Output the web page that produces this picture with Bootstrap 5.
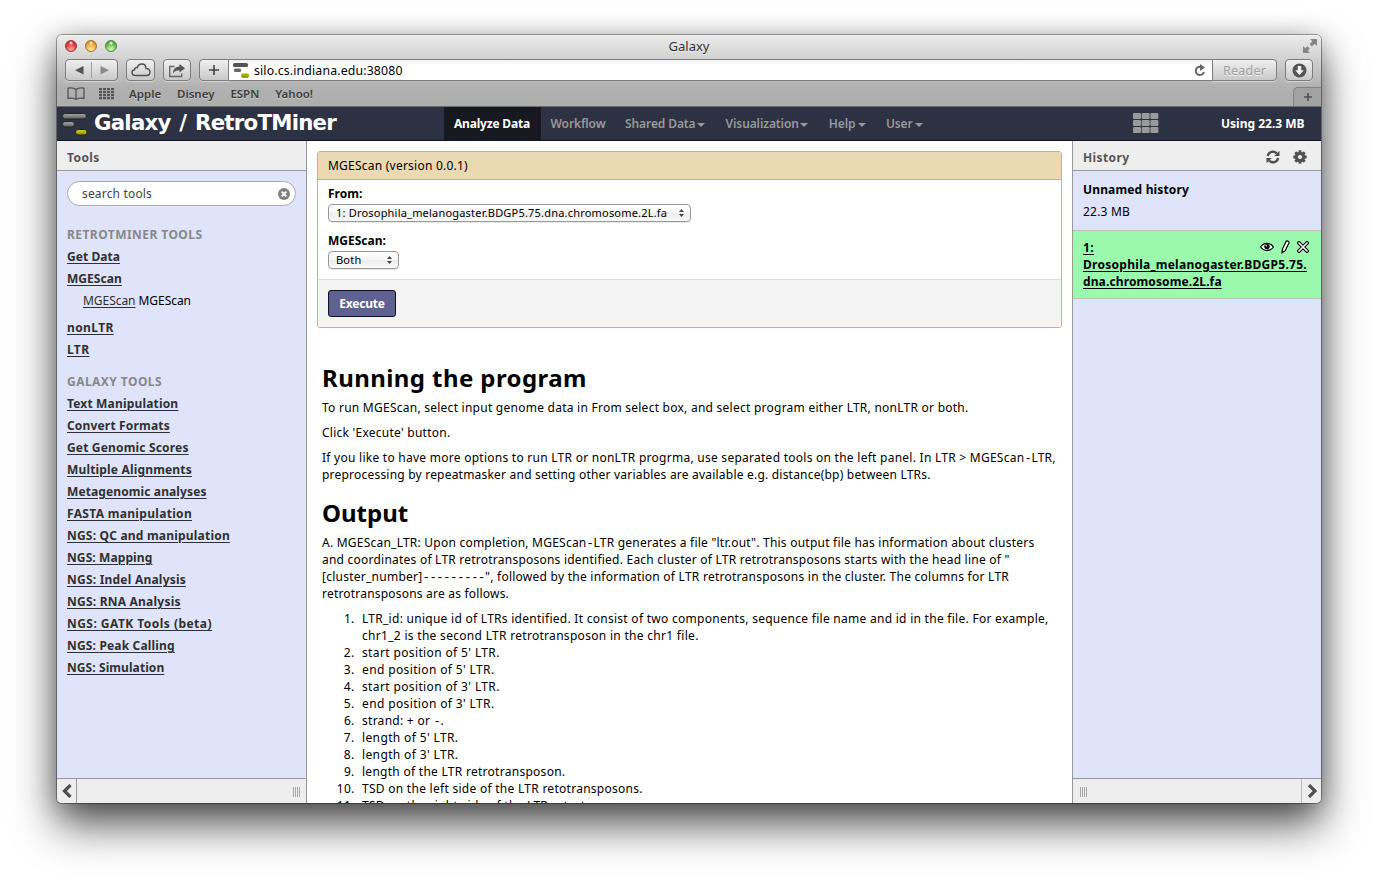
<!DOCTYPE html>
<html lang="en">
<head>
<meta charset="utf-8">
<title>Galaxy</title>
<link href="https://cdn.jsdelivr.net/npm/bootstrap@5.3.0/dist/css/bootstrap.min.css" rel="stylesheet">
<script src="https://cdn.jsdelivr.net/npm/bootstrap@5.3.0/dist/js/bootstrap.bundle.min.js"></script>
<style>
body{font-family:"Noto Sans","Open Sans",sans-serif;font-size:12px;line-height:17px;color:#000;background:#fff;overflow:hidden}
a{color:#303030;text-underline-offset:2px;text-decoration-thickness:1px}
svg{display:block;flex:none}
.desktop{padding:35px 57px 0;height:882px;overflow:hidden}
.window{width:1264px;height:768px;border-radius:5px;box-shadow:0 0 0 1px rgba(0,0,0,.35),0 22px 44px rgba(0,0,0,.65),0 4px 26px rgba(0,0,0,.28)}
.window-inner{border-radius:5px;overflow:hidden;height:768px}
/* browser chrome */
.chrome{height:72px;background:linear-gradient(#ececec,#d4d4d4 22px,#b1b1b1 52px,#adadad);border-bottom:1px solid #6c6c6c;box-shadow:inset 0 1px #f4f4f4}
.titlebar{height:23px;padding:0 4px 1px 8px}
.lamp{width:12px;height:12px;border-radius:50%;margin-right:8px}
.lamp-r{background:radial-gradient(circle at 50% 20%,#fff 0,transparent 25%),radial-gradient(circle at 50% 85%,#ffb0a8,#ec3940 55%,#a3222a);border:1px solid #9b3337}
.lamp-y{background:radial-gradient(circle at 50% 20%,#fff 0,transparent 25%),radial-gradient(circle at 50% 85%,#fff0a0,#f3a937 55%,#a8661a);border:1px solid #a8722f}
.lamp-g{background:radial-gradient(circle at 50% 20%,#fff 0,transparent 25%),radial-gradient(circle at 50% 85%,#dcffb5,#6dc14f 55%,#3b7a2c);border:1px solid #4f8745}
.win-title{font-size:13px;color:#333;text-shadow:0 1px rgba(255,255,255,.5)}
.toolrow{padding:1px 8px 0}
.tbtn{height:22px;border:1px solid #7d7d7d;border-radius:4px;background:linear-gradient(#f0f0f0,#c9c9c9);box-shadow:0 1px rgba(255,255,255,.4)}
.tbtn.flat-e{border-radius:4px 0 0 4px}
.tbtn.flat-w{border-radius:0 4px 4px 0}
.addr{height:22px;background:linear-gradient(#f0f0f0,#fff 5px);border:1px solid #7d7d7d;border-width:1px 0;font-size:12.3px;letter-spacing:.15px;padding:0 6px 0 4px}
.reader{font-size:12.5px;color:#a2a2a2;text-shadow:0 1px #eee;letter-spacing:.25px}
.bookmarks{padding-left:10px;font-size:11.5px;font-weight:600;color:#3d3d3d;text-shadow:0 1px rgba(255,255,255,.35)}
.tabplus{width:28px;height:19px;border:1px solid #818181;border-width:1px 0 0 1px;border-radius:5px 0 0 0;background:#a2a2a2}
/* masthead */
.masthead{height:34px;background:#2c3143;border-bottom:1px solid #16121f;color:#999;font-weight:600;letter-spacing:-.1px}
.brand-area{width:387px;padding-left:5px}
.brand-title{font:700 21.3px/30px "DejaVu Sans",Verdana,sans-serif;color:#fff;letter-spacing:-.75px;word-spacing:2px;padding:0 0 1px 6px}
.mast-tab{height:33px;padding:0 10px 0 9.5px}
.mast-tab.on{background:#181820;color:#fff;font-weight:700;letter-spacing:-.2px;padding:0 10px;width:97px}
.mast-tab.wide{padding-left:11px}
.caret{border:4px solid transparent;border-top-color:#999;border-bottom:0;margin:3px 0 0 1px}
.usage{color:#fff;font-weight:700;letter-spacing:0;width:85px}
/* panels */
.side{background:#dfe4fa}
.side-l{width:250px;border-right:1px solid #999}
.side-r{width:249px;border-left:1px solid #999}
.panel-head{height:30px;background:#eee;border-bottom:1px solid #999;padding:3px 14px 0 10px;font-weight:700;color:#555;letter-spacing:.4px}
.panel-foot{height:25px;background:#eee;border-top:1px solid #999}
.grip{width:7px;height:10px;background:repeating-linear-gradient(90deg,#a6a6a6 0 1px,transparent 1px 2px)}
.search{height:25px;border:1px solid #aaa;border-radius:13px;background:#fff;padding:0 5px 0 14px;color:#444;letter-spacing:.17px}
.tool,.sect{height:22px;padding-top:2px;font-weight:700;letter-spacing:.17px}
.sect{color:#888;letter-spacing:.45px}
.subtool{height:27px;padding:2px 0 0 16px;letter-spacing:-.05px}
/* tool form */
.form-box{border:1px solid #d8b365;border-radius:3px;height:177px;overflow:hidden}
.form-title{height:28px;background:#ebd9b2;border-bottom:1px solid #d8b365;padding:5px 0 0 10px;letter-spacing:.23px}
.form-foot{height:48px;background:#f4f4f4;border-top:1px solid #ddd;padding:10px}
.sel{height:18px;border:1px solid #989898;border-radius:4px;background:linear-gradient(#fff,#f5f5f5 50%,#ececec 51%,#fafafa);padding:0 6px 1px 7px;font-size:11px;letter-spacing:.2px;box-shadow:0 1px rgba(0,0,0,.08)}
.sel-long{width:363px}
.sel-short{width:71px}
.exec{width:68px;height:27px;border:1px solid #101020;border-radius:3px;background:#5f6190;color:#fff;font-weight:700;letter-spacing:-.2px}
.help{padding:38px 0 0 5px;letter-spacing:.25px}
.help h2{font-size:24px;line-height:24px;font-weight:700;margin:0 0 9px;letter-spacing:.42px}
.help p{margin:0 0 8px;white-space:nowrap}
.help ol{margin:0;padding-left:36px;white-space:nowrap;letter-spacing:.275px}
.help li{padding-left:4px}
.help li.pos{letter-spacing:.37px}
.dashes,.dash{font-family:"Liberation Mono",monospace;letter-spacing:-.25px;line-height:1}
.ds{background:#9bf9ad;border:1px solid #bfbfbf;border-width:1px 0;height:69px;padding:8px 10px 0;font-weight:700;letter-spacing:.28px}
.ds a{color:#000}
.ds-icons{top:9px;right:12px}
</style>
</head>
<body>
<div class="desktop"><div class="window"><div class="window-inner d-flex flex-column">

<div class="chrome d-flex flex-column flex-shrink-0">
  <div class="titlebar d-flex align-items-center position-relative">
    <i class="lamp lamp-r"></i><i class="lamp lamp-y"></i><i class="lamp lamp-g"></i>
    <div class="win-title position-absolute start-0 end-0 text-center">Galaxy</div>
    <svg class="ms-auto" width="14" height="14" viewBox="0 0 14 14" fill="#858585"><path d="M7 0h7v7l-2.300-2.300-2.700 2.700-2.400-2.400L9.300 2.300z"/><path d="M0 14V7l2.300 2.300L4.400 7.200l2.400 2.400-2.100 2.100L7 14z"/></svg>
  </div>
  <div class="toolrow d-flex">
    <div class="tbtn d-flex align-items-center" style="width:53px">
      <svg width="51" height="20" viewBox="0 0 51 20"><path d="M17.500 6v8.500L9 10.300z" fill="#555"/><path d="M34.500 6v8.500L43 10.300z" fill="#8c8c8c"/><path d="M25.500 2v16" stroke="#a0a0a0"/></svg>
    </div>
    <div class="tbtn d-flex align-items-center justify-content-center ms-2" style="width:29px">
      <svg width="20" height="14" viewBox="0 0 20 14" fill="none" stroke="#505050" stroke-width="1.400"><path d="M4.500 12.500C2.400 12.500 1 11.300 1 9.500 1 7.800 2.200 6.800 3.600 6.700 3.500 4.900 5.200 4.200 6.300 4.700 7 2.200 8.800 1 10.800 1c2.700 0 4.200 2 4.200 4.500 2.200-.3 4 1.300 4 3.500 0 2-1.400 3.500-3.700 3.500z"/></svg>
    </div>
    <div class="tbtn d-flex align-items-center justify-content-center ms-2" style="width:28px">
      <svg width="18" height="15" viewBox="0 0 18 15"><path d="M6.500 3.500H1.700v10h12V10.500" fill="none" stroke="#666" stroke-width="1.400"/><path d="M11.500 1l5.500 4.300-5.500 4.300V7.200C8.500 7.200 6.500 8.200 5 10.500 5 6.500 7.500 3.700 11.500 3.500z" fill="#555"/></svg>
    </div>
    <div class="tbtn flat-e d-flex align-items-center justify-content-center ms-2" style="width:30px">
      <svg width="10" height="10" viewBox="0 0 10 10" stroke="#444" stroke-width="1.600"><path d="M5 0v10M0 5h10"/></svg>
    </div>
    <div class="addr d-flex align-items-center flex-fill">
      <svg width="16" height="15" viewBox="0 0 16 15"><rect width="15" height="4" y="0" rx="1.500" fill="#555"/><rect x="1" y="5.500" width="7" height="3.500" rx="1.500" fill="#666"/><rect x="8" y="10.500" width="8" height="4" rx="1.500" fill="#aab000"/><path d="M9 14h6" stroke="#666800"/></svg>
      <span style="padding-left:5px">silo.cs.indiana.edu:38080</span>
      <svg class="ms-auto" width="12" height="13" viewBox="0 0 12 13"><path d="M9 4A4.200 4.200 0 1 0 10 8" fill="none" stroke="#666" stroke-width="1.900"/><path d="M6 0l5 3.500L6 7z" fill="#666"/></svg>
    </div>
    <div class="tbtn flat-w reader d-flex align-items-center justify-content-center" style="width:65px">Reader</div>
    <div class="tbtn d-flex align-items-center justify-content-center ms-2" style="width:28px">
      <svg width="15" height="15" viewBox="0 0 15 15"><circle cx="7.500" cy="7.500" r="7" fill="#555"/><path d="M5.800 3h3.400v4.300h2.600L7.500 12 3.200 7.300h2.600z" fill="#f4f4f4"/></svg>
    </div>
  </div>
  <div class="bookmarks d-flex align-items-center flex-fill">
    <svg width="18" height="13" viewBox="0 0 18 13" fill="none" stroke="#555" stroke-width="1.300"><path d="M9 2.500C7 .8 4 .5 1 1.200v10.300c3-.6 6-.3 8 1 2-1.300 5-1.600 8-1V1.200C14 .5 11 .8 9 2.500v10"/></svg>
    <svg style="margin:0 15px 0 14px" width="15" height="12" viewBox="0 0 15 12" fill="#555"><path d="M0 0h3v2.200H0zM4 0h3v2.200H4zM8 0h3v2.200H8zM12 0h3v2.200h-3zM0 3h3v2.200H0zM4 3h3v2.200H4zM8 3h3v2.200H8zM12 3h3v2.200h-3zM0 6h3v2.200H0zM4 6h3v2.200H4zM8 6h3v2.200H8zM12 6h3v2.200h-3zM0 9h3v2.200H0zM4 9h3v2.200H4zM8 9h3v2.200H8zM12 9h3v2.200h-3z"/></svg>
    <div class="d-flex" style="gap:15.900px"><span>Apple</span><span>Disney</span><span>ESPN</span><span>Yahoo!</span></div>
    <div class="tabplus ms-auto align-self-end d-flex align-items-center justify-content-center"><svg width="8" height="8" viewBox="0 0 8 8" stroke="#505050" stroke-width="1.600"><path d="M4 0v8M0 4h8"/></svg></div>
  </div>
</div>

<nav class="masthead d-flex align-items-center flex-shrink-0">
  <div class="brand-area d-flex align-items-center">
    <svg style="margin-top:2px" width="26" height="24" viewBox="0 0 26 24"><defs><linearGradient id="gr" x2="0" y2="1"><stop stop-color="#aaa"/><stop offset="1" stop-color="#5c5c5c"/></linearGradient><linearGradient id="ye" x2="0" y2="1"><stop stop-color="#dada20"/><stop offset="1" stop-color="#8c8c00"/></linearGradient></defs><rect x=".5" y=".5" width="24" height="5.500" rx="2.700" fill="url(#gr)" stroke="#222"/><rect x=".5" y="8.500" width="12" height="5.500" rx="2.700" fill="url(#gr)" stroke="#222"/><rect x="13.500" y="16.500" width="11.500" height="5.500" rx="2.700" fill="url(#ye)" stroke="#222"/></svg>
    <span class="brand-title">Galaxy / RetroTMiner</span>
  </div>
  <div class="mast-tab on d-flex align-items-center">Analyze Data</div>
  <div class="mast-tab d-flex align-items-center">Workflow</div>
  <div class="mast-tab d-flex align-items-center">Shared Data<i class="caret"></i></div>
  <div class="mast-tab wide d-flex align-items-center">Visualization<i class="caret"></i></div>
  <div class="mast-tab wide d-flex align-items-center">Help<i class="caret" style="margin-left:3px"></i></div>
  <div class="mast-tab d-flex align-items-center">User<i class="caret" style="margin-left:2px"></i></div>
  <svg class="ms-auto" width="26" height="21" viewBox="0 0 26 21" fill="#999"><rect width="8" height="6" rx="1"/><rect x="8.700" width="8" height="6" rx="1"/><rect x="17.400" width="8" height="6" rx="1"/><rect y="7" width="8" height="6" rx="1"/><rect x="8.700" y="7" width="8" height="6" rx="1"/><rect x="17.400" y="7" width="8" height="6" rx="1"/><rect y="14" width="8" height="6" rx="1"/><rect x="8.700" y="14" width="8" height="6" rx="1"/><rect x="17.400" y="14" width="8" height="6" rx="1"/></svg>
  <span class="usage text-nowrap" style="margin:0 15px 0 62px">Using 22.3 MB</span>
</nav>

<div class="d-flex flex-fill overflow-hidden">
  <aside class="side side-l d-flex flex-column flex-shrink-0">
    <div class="panel-head d-flex align-items-center flex-shrink-0">Tools</div>
    <div class="flex-fill" style="padding:10px 10px 0">
      <div class="search d-flex align-items-center justify-content-between">search tools
        <svg width="12" height="12" viewBox="0 0 12 12"><circle cx="6" cy="6" r="6" fill="#808080"/><path d="M3.700 3.700l4.600 4.600M8.300 3.700L3.700 8.300" stroke="#fff" stroke-width="1.900"/></svg>
      </div>
      <div class="sect" style="margin-top:18px">RETROTMINER TOOLS</div>
      <div class="tool"><a href="#" style="letter-spacing:.05px">Get Data</a></div>
      <div class="tool"><a href="#" style="letter-spacing:.05px">MGEScan</a></div>
      <div class="subtool"><a href="#">MGEScan</a> MGEScan</div>
      <div class="tool"><a href="#" style="letter-spacing:.4px">nonLTR</a></div>
      <div class="tool"><a href="#" style="letter-spacing:.4px">LTR</a></div>
      <div class="sect" style="margin-top:10px">GALAXY TOOLS</div>
      <div class="tool"><a href="#">Text Manipulation</a></div>
      <div class="tool"><a href="#">Convert Formats</a></div>
      <div class="tool"><a href="#">Get Genomic Scores</a></div>
      <div class="tool"><a href="#">Multiple Alignments</a></div>
      <div class="tool"><a href="#" style="letter-spacing:.11px">Metagenomic analyses</a></div>
      <div class="tool"><a href="#" style="letter-spacing:.32px">FASTA manipulation</a></div>
      <div class="tool"><a href="#" style="letter-spacing:.2px">NGS: QC and manipulation</a></div>
      <div class="tool"><a href="#" style="letter-spacing:.1px">NGS: Mapping</a></div>
      <div class="tool"><a href="#" style="letter-spacing:.22px">NGS: Indel Analysis</a></div>
      <div class="tool"><a href="#" style="letter-spacing:.22px">NGS: RNA Analysis</a></div>
      <div class="tool"><a href="#" style="letter-spacing:.46px">NGS: GATK Tools (beta)</a></div>
      <div class="tool"><a href="#">NGS: Peak Calling</a></div>
      <div class="tool"><a href="#" style="letter-spacing:.08px">NGS: Simulation</a></div>
    </div>
    <div class="panel-foot d-flex align-items-center flex-shrink-0">
      <div class="h-100 d-flex align-items-center border-end" style="width:20px;border-color:#999!important;padding-left:4px"><svg width="11" height="14" viewBox="0 0 11 14" fill="none" stroke="#505050" stroke-width="3.200"><path d="M9.500 1L3.500 7l6 6"/></svg></div>
      <i class="grip ms-auto" style="margin:2px 6px 0 0"></i>
    </div>
  </aside>

  <main class="flex-fill overflow-hidden" style="padding:10px 10px 0">
    <div class="form-box d-flex flex-column">
      <div class="form-title">MGEScan (version 0.0.1)</div>
      <div class="flex-fill" style="padding:5px 10px 0">
        <div class="fw-bold">From:</div>
        <div class="sel sel-long d-flex align-items-center justify-content-between" style="margin:2px 0 10px">1: Drosophila_melanogaster.BDGP5.75.dna.chromosome.2L.fa
          <svg width="5" height="8" viewBox="0 0 5 8" fill="#444"><path d="M0 3l2.500-3L5 3zM0 5l2.500 3L5 5z"/></svg></div>
        <div class="fw-bold">MGEScan:</div>
        <div class="sel sel-short d-flex align-items-center justify-content-between" style="margin-top:2px">Both
          <svg width="5" height="8" viewBox="0 0 5 8" fill="#444"><path d="M0 3l2.500-3L5 3zM0 5l2.500 3L5 5z"/></svg></div>
      </div>
      <div class="form-foot"><div class="exec d-flex align-items-center justify-content-center">Execute</div></div>
    </div>
    <div class="help">
      <h2>Running the program</h2>
      <p>To run MGEScan, select input genome data in From select box, and select program either LTR, nonLTR or both.</p>
      <p>Click 'Execute' button.</p>
      <p style="margin-bottom:18px"><span style="letter-spacing:.26px">If you like to have more options to run LTR or nonLTR progrma, use separated tools on the left panel. In LTR &gt; MGEScan<span class="dash">-</span>LTR,</span><br><span style="letter-spacing:.21px">preprocessing by repeatmasker and setting other variables are available e.g. distance(bp) between LTRs.</span></p>
      <h2 style="letter-spacing:0">Output</h2>
      <p><span style="letter-spacing:.23px">A. MGEScan_LTR: Upon completion, MGEScan<span class="dash">-</span>LTR generates a file "ltr.out". This output file has information about clusters</span><br><span style="letter-spacing:.23px">and coordinates of LTR retrotransposons identified. Each cluster of LTR retrotransposons starts with the head line of "</span><br>[cluster_number]<span class="dashes">---------</span>", followed by the information of LTR retrotransposons in the cluster. The columns for LTR<br><span style="letter-spacing:.2px">retrotransposons are as follows.</span></p>
      <ol>
        <li>LTR_id: unique id of LTRs identified. It consist of two components, sequence file name and id in the file. For example,<br><span style="letter-spacing:.3px">chr1_2 is the second LTR retrotransposon in the chr1 file.</span></li>
        <li class="pos">start position of 5' LTR.</li>
        <li class="pos">end position of 5' LTR.</li>
        <li class="pos">start position of 3' LTR.</li>
        <li class="pos">end position of 3' LTR.</li>
        <li>strand: + or <span class="dash">-</span>.</li>
        <li class="pos">length of 5' LTR.</li>
        <li class="pos">length of 3' LTR.</li>
        <li>length of the LTR retrotransposon.</li>
        <li>TSD on the left side of the LTR retotransposons.</li>
        <li>TSD on the right side of the LTR retrotransposons.</li>
      </ol>
    </div>
  </main>

  <aside class="side side-r d-flex flex-column flex-shrink-0">
    <div class="panel-head d-flex align-items-center flex-shrink-0">History
      <svg class="ms-auto" width="14" height="14" viewBox="0 0 14 14"><path d="M1.800 6A5.200 5.200 0 0 1 10.800 3.500M12.200 8A5.200 5.200 0 0 1 3.200 10.500" fill="none" stroke="#505050" stroke-width="2.400"/><path d="M13.500 .8V6H8.300zM.5 13.200V8h5.200z" fill="#505050"/></svg>
      <svg style="margin-left:13px" width="14" height="14" viewBox="0 0 14 14"><circle cx="7" cy="7" r="3.700" fill="none" stroke="#505050" stroke-width="3.200"/><path d="M7 .3v2.400M7 11.300v2.400M.3 7h2.400M11.300 7h2.400M2.300 2.300L4 4M10 10l1.700 1.700M11.700 2.300L10 4M4 10l-1.700 1.700" stroke="#505050" stroke-width="2.800"/></svg>
    </div>
    <div class="flex-fill">
      <div style="padding:10px 10px 0;height:59px"><div class="fw-bold" style="letter-spacing:.15px">Unnamed history</div><div style="padding-top:5px;letter-spacing:.2px">22.3 MB</div></div>
      <div class="ds position-relative">
        <a href="#">1:<br>Drosophila_melanogaster.BDGP5.75.<br><span style="letter-spacing:.12px">dna.chromosome.2L.fa</span></a>
        <div class="ds-icons position-absolute d-flex align-items-center">
          <svg width="14" height="10" viewBox="0 0 14 10"><path d="M.6 5C3.600.2 10.400.2 13.400 5 10.400 9.500 3.600 9.500.6 5z" fill="#fff" stroke="#000" stroke-width="1.200"/><circle cx="7" cy="4.600" r="2.700"/><circle cx="6.200" cy="3.800" r=".8" fill="#fff"/></svg>
          <svg style="margin:0 7px" width="9" height="14" viewBox="0 0 9 14"><path d="M1 12.800l.3-3.500L5 1.500C6 .3 8.200 1.300 8 2.900L4.200 10.700z" fill="#fff" stroke="#000" stroke-width="1.200"/><path d="M1 13l.3-2.500 1.600.9z"/></svg>
          <svg width="12" height="12" viewBox="0 0 12 12"><path d="M2 2l8 8M10 2l-8 8" stroke="#000" stroke-width="3.800" stroke-linecap="round"/><path d="M2 2l8 8M10 2l-8 8" stroke="#fff" stroke-width="1.700" stroke-linecap="round"/></svg>
        </div>
      </div>
    </div>
    <div class="panel-foot d-flex align-items-center flex-shrink-0">
      <i class="grip" style="margin:2px 0 0 7px"></i>
      <div class="ms-auto h-100 d-flex align-items-center border-start" style="width:20px;border-color:#bbb!important;padding-left:5px"><svg width="11" height="14" viewBox="0 0 11 14" fill="none" stroke="#505050" stroke-width="3.200"><path d="M2 1l6 6-6 6"/></svg></div>
    </div>
  </aside>
</div>
</div></div></div>
</body></html>
